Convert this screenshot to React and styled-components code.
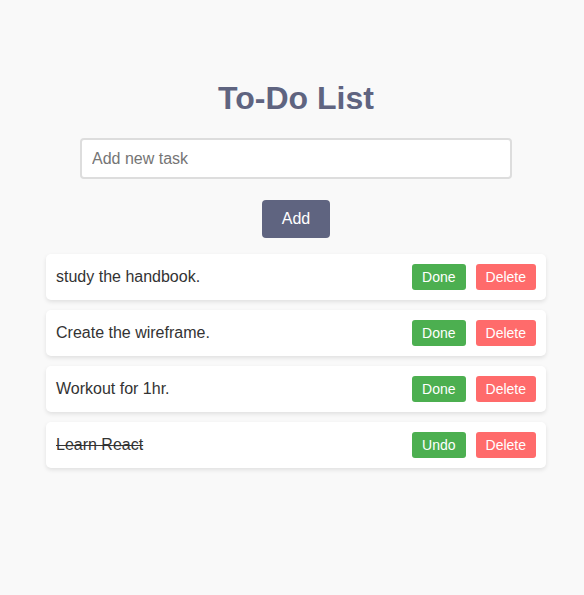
import React, { useState } from "react";
import styled, { createGlobalStyle } from "styled-components";

const GlobalStyle = createGlobalStyle`
  body {
    margin: 0 0 0 8px;
    background: #f9f9f9;
    font-family: "Liberation Sans", Arial, sans-serif;
  }
`;

const Container = styled.div`
  width: 500px;
  margin: 59px auto 0;
  padding-bottom: 10px;
  display: flex;
  flex-direction: column;
  align-items: center;
`;

const Title = styled.h1`
  margin: 21px 0 21px;
  font-size: 32px;
  font-weight: bold;
  color: #5f6480;
  line-height: 37px;
`;

const Input = styled.input`
  box-sizing: border-box;
  width: 432px;
  height: 41px;
  padding: 10px;
  font-size: 16px;
  font-family: inherit;
  border: 2px solid #ddd;
  border-radius: 4px;
  background: #fff;
  outline: none;

  &::placeholder { color: #757575; }
`;

const AddButton = styled.button`
  margin: 21px 0 16px;
  padding: 10px 20px;
  font-size: 16px;
  font-family: inherit;
  line-height: 18px;
  color: #fff;
  background: #5f6480;
  border: none;
  border-radius: 4px;
  cursor: pointer;
`;

const List = styled.ul`
  list-style: none;
  margin: 0;
  padding: 0;
  width: 100%;
  display: flex;
  flex-direction: column;
  gap: 10px;
`;

const Item = styled.li`
  display: flex;
  align-items: center;
  gap: 10px;
  padding: 10px;
  background: #fff;
  border-radius: 5px;
  box-shadow: 0 2px 4px rgba(0, 0, 0, 0.1);
`;

const Text = styled.span`
  flex: 1;
  font-size: 16px;
  color: #333;
  text-decoration: ${(p) => (p.done ? "line-through" : "none")};
`;

const SmallButton = styled.button`
  padding: 5px 10px;
  font-size: 14px;
  font-family: inherit;
  line-height: 16px;
  color: #fff;
  background: ${(p) => (p.danger ? "#ff6b6b" : "#4caf50")};
  border: none;
  border-radius: 3px;
  cursor: pointer;
`;

const initial = [
  { id: 1, text: "study the handbook.", done: false },
  { id: 2, text: "Create the wireframe.", done: false },
  { id: 3, text: "Workout for 1hr.", done: false },
  { id: 4, text: "Learn React", done: true },
];

export default function App() {
  const [tasks, setTasks] = useState(initial);
  const [value, setValue] = useState("");

  function addTask() {
    if (!value.trim()) return;
    setTasks([...tasks, { id: Date.now(), text: value, done: false }]);
    setValue("");
  }

  function toggle(id) {
    setTasks(tasks.map((t) => (t.id === id ? { ...t, done: !t.done } : t)));
  }

  function remove(id) {
    setTasks(tasks.filter((t) => t.id !== id));
  }

  return (
    <>
      <GlobalStyle />
      <Container>
        <Title>To-Do List</Title>
        <Input
          placeholder="Add new task"
          value={value}
          onChange={(e) => setValue(e.target.value)}
        />
        <AddButton onClick={addTask}>Add</AddButton>
        <List>
          {tasks.map((t) => (
            <Item key={t.id}>
              <Text done={t.done}>{t.text}</Text>
              <SmallButton onClick={() => toggle(t.id)}>{t.done ? "Undo" : "Done"}</SmallButton>
              <SmallButton danger onClick={() => remove(t.id)}>Delete</SmallButton>
            </Item>
          ))}
        </List>
      </Container>
    </>
  );
}
